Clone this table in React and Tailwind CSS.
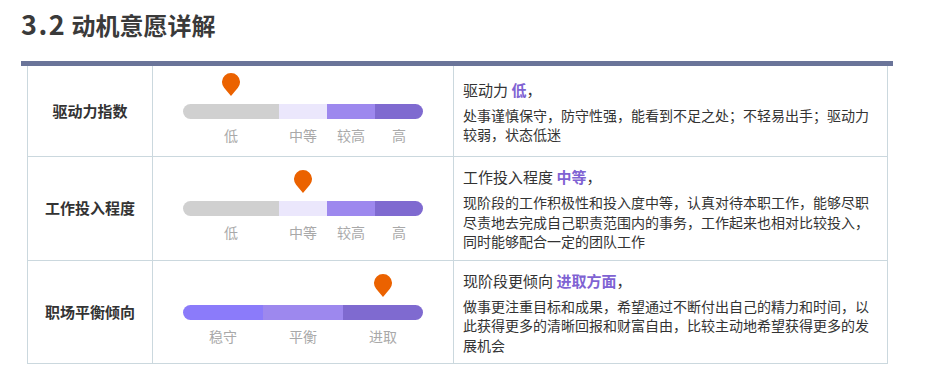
import React from "react";

const FONT = { fontFamily: '"Noto Sans CJK SC", "Noto Sans", sans-serif' };

function Pin() {
  return (
    <svg width="18" height="23" viewBox="0 0 18 23" className="block">
      <path d="M9 23 L2.1 14.8 A9 9 0 1 1 15.9 14.8 Z" fill="#eb6200" />
    </svg>
  );
}

const rows = [
  {
    label: "驱动力指数",
    cols: "grid-cols-[96px_48px_48px_48px]",
    segs: [
      { c: "bg-[#d0d0d0]", t: "低" },
      { c: "bg-[#ebe7fc]", t: "中等" },
      { c: "bg-[#9d88ee]", t: "较高" },
      { c: "bg-[#7f6ad0]", t: "高" },
    ],
    pin: "col-start-1",
    head: "驱动力",
    hl: "低",
    body: ["处事谨慎保守，防守性强，能看到不足之处；不轻易出手；驱动力较弱，状态低迷"],
  },
  {
    label: "工作投入程度",
    cols: "grid-cols-[96px_48px_48px_48px]",
    segs: [
      { c: "bg-[#d0d0d0]", t: "低" },
      { c: "bg-[#ebe7fc]", t: "中等" },
      { c: "bg-[#9d88ee]", t: "较高" },
      { c: "bg-[#7f6ad0]", t: "高" },
    ],
    pin: "col-start-2",
    head: "工作投入程度",
    hl: "中等",
    body: ["现阶段的工作积极性和投入度中等，认真对待本职工作，能够尽职尽责地去完成自己职责范围内的事务，工作起来也相对比较投入，同时能够配合一定的团队工作"],
  },
  {
    label: "职场平衡倾向",
    cols: "grid-cols-[80px_80px_80px]",
    segs: [
      { c: "bg-[#8b7bfa]", t: "稳守" },
      { c: "bg-[#9d88ee]", t: "平衡" },
      { c: "bg-[#7f6ad0]", t: "进取" },
    ],
    pin: "col-start-3",
    head: "现阶段更倾向",
    hl: "进取方面",
    body: ["做事更注重目标和成果，希望通过不断付出自己的精力和时间，以", "此获得更多的清晰回报和财富自由，比较主动地希望获得更多的发展机会"],
  },
];

function Row({ r }) {
  return (
    <div className="flex border-b border-[#cbd8de]">
      <div className="w-[125px] shrink-0 border-r border-[#cbd8de] flex items-center justify-center text-[15px] font-bold text-[#333]">
        {r.label}
      </div>
      <div className="w-[301px] shrink-0 border-r border-[#cbd8de] flex flex-col justify-center items-center pt-[7px] pb-[9px]">
        <div className="w-[240px]">
          <div className={`grid ${r.cols} h-[23px]`}>
            <div className={`${r.pin} justify-self-center`}>
              <Pin />
            </div>
          </div>
          <div className={`grid ${r.cols} h-[15px] mt-[8px] rounded-full overflow-hidden`}>
            {r.segs.map((s, i) => (
              <div key={i} className={`${s.c} h-full`} />
            ))}
          </div>
          <div className={`grid ${r.cols} mt-[4px] h-[24px] leading-[24px] text-[14px] text-[#a9a9a9]`}>
            {r.segs.map((s, i) => (
              <div key={i} className="text-center">
                {s.t}
              </div>
            ))}
          </div>
        </div>
      </div>
      <div className="w-[432px] shrink-0 flex flex-col justify-center pl-[9px] pr-[15px] py-2 text-[#333]">
        <div className="text-[15px] leading-[24px]">
          {r.head} <span className="font-bold text-[#7f63d3]">{r.hl}</span>，
        </div>
        <div className="mt-[4px] text-[14px] leading-[19.5px] text-[#333]">
          {r.body.map((b, i) => (
            <React.Fragment key={i}>
              {i > 0 && <br />}
              {b}
            </React.Fragment>
          ))}
        </div>
      </div>
    </div>
  );
}

export default function App() {
  return (
    <div className="w-[926px] h-[386px] bg-white overflow-hidden" style={FONT}>
      <div className="pt-2 pl-[21px]">
        <h2 className="text-[24px] leading-[32px] font-bold text-[#3a3a3a]">
          <span className="text-[27px] tracking-[1.5px]">3.2</span> 动机意愿详解
        </h2>
      </div>
      <div className="mt-[20px] ml-[21px] w-[872px] border-t-[5px] border-[#6a7499] px-[6px]">
        <div className="border-l border-[#cbd8de] border-r-0">
          <div className="border-r border-[#cbd8de] w-[860px]">
            {rows.map((r, i) => (
              <Row key={i} r={r} />
            ))}
          </div>
        </div>
      </div>
    </div>
  );
}
